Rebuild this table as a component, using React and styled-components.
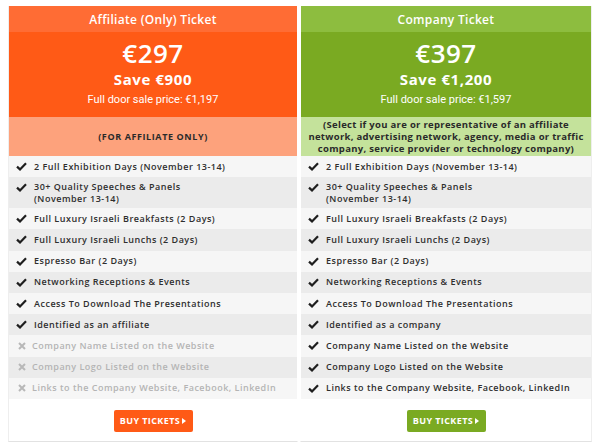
import React from "react";
import styled, { createGlobalStyle } from "styled-components";

const Global = createGlobalStyle`
  html, body { margin: 0; padding: 0; background: #ffffff; }
  body { font-family: "Open Sans", "DejaVu Sans", sans-serif; }
  * { box-sizing: border-box; }
`;

const Page = styled.div`
  width: 600px;
  height: 446px;
  padding: 6px 8px 0 8px;
  display: flex;
  gap: 2px;
`;

const Column = styled.div`
  flex: 0 0 ${(p) => p.$w}px;
  display: flex;
  flex-direction: column;
  background: #ffffff;
  border-bottom: 1px solid #e2e2e2;
  border-left: 1px solid ${(p) => (p.$first ? "#eeeeee" : "transparent")};
  border-right: 1px solid ${(p) => (p.$first ? "transparent" : "#eeeeee")};
  height: 436px;
`;

const Head = styled.div`
  height: 26px;
  display: flex;
  align-items: center;
  justify-content: center;
  background: ${(p) => p.$bg};
  color: #ffffff;
  font-size: 12px;
  font-weight: 600;
  letter-spacing: 0.3px;
`;

const Price = styled.div`
  height: 85px;
  background: ${(p) => p.$bg};
  color: #ffffff;
  display: flex;
  flex-direction: column;
  align-items: center;
  padding-top: 6px;
`;

const Amount = styled.div`
  font-size: 26px;
  font-weight: 600;
  line-height: 31px;
  letter-spacing: 0.5px;
`;

const Save = styled.div`
  font-size: 15px;
  font-weight: 700;
  line-height: 20px;
  letter-spacing: 0.6px;
`;

const Door = styled.div`
  font-family: Roboto, "Liberation Sans", sans-serif;
  font-size: 11px;
  line-height: 16px;
  margin-top: 3px;
`;

const Note = styled.div`
  height: 39px;
  background: ${(p) => p.$bg};
  color: #2a2a2a;
  display: flex;
  align-items: center;
  justify-content: center;
  text-align: center;
  font-size: ${(p) => (p.$small ? "9.5px" : "9px")};
  font-weight: 700;
  line-height: 12px;
  letter-spacing: ${(p) => (p.$small ? "0.3px" : "0.6px")};
  padding: 0 6px;
`;

const List = styled.ul`
  list-style: none;
  margin: 0;
  padding: 0;
`;

const Row = styled.li`
  height: ${(p) => (p.$tall ? 31 : 21.2)}px;
  display: flex;
  align-items: ${(p) => (p.$tall ? "flex-start" : "center")};
  padding: ${(p) => (p.$tall ? "4px 0 0 7px" : "0 0 0 7px")};
  background: ${(p) => (p.$odd ? "#ebebeb" : "#f6f6f6")};
  color: ${(p) => (p.$off ? "#b4b4b4" : "#2e2e2e")};
  font-size: 9px;
  font-weight: 600;
  letter-spacing: 0.5px;
  line-height: 12px;
  gap: ${(p) => (p.$off ? 6 : 7)}px;
`;

const IconBox = styled.span`
  flex: 0 0 ${(p) => (p.$off ? 9 : 11)}px;
  display: flex;
  align-items: center;
  justify-content: center;
  height: 12px;
  margin-left: ${(p) => (p.$off ? 1 : 0)}px;
`;

const Footer = styled.div`
  flex: 1;
  display: flex;
  justify-content: center;
  padding-top: 11px;
`;

const Button = styled.button`
  width: 79px;
  height: 22px;
  border: none;
  border-radius: 2px;
  background: ${(p) => p.$bg};
  color: #ffffff;
  font-family: "Open Sans", sans-serif;
  font-size: 9px;
  font-weight: 700;
  letter-spacing: 0.4px;
  display: flex;
  align-items: center;
  justify-content: center;
  gap: 2px;
  padding: 0;
`;

const Check = () => (
  <svg width="11" height="9" viewBox="0 0 11 9">
    <path d="M1 4.6 L4 7.4 L10 1.2" fill="none" stroke="#1e1e1e" strokeWidth="2.2" />
  </svg>
);

const Cross = () => (
  <svg width="8" height="8" viewBox="0 0 8 8">
    <path d="M1 1 L7 7 M7 1 L1 7" fill="none" stroke="#b8b8b8" strokeWidth="2" />
  </svg>
);

const Arrow = () => (
  <svg width="4" height="6" viewBox="0 0 4 6">
    <path d="M0 0 L4 3 L0 6 Z" fill="#ffffff" />
  </svg>
);

const common = [
  ["2 Full Exhibition Days (November 13-14)"],
  ["30+ Quality Speeches & Panels", "(November 13-14)"],
  ["Full Luxury Israeli Breakfasts (2 Days)"],
  ["Full Luxury Israeli Lunchs (2 Days)"],
  ["Espresso Bar (2 Days)"],
  ["Networking Receptions & Events"],
  ["Access To Download The Presentations"],
];
const extra = [
  ["Company Name Listed on the Website"],
  ["Company Logo Listed on the Website"],
  ["Links to the Company Website, Facebook, LinkedIn"],
];

const plans = [
  {
    title: "Affiliate (Only) Ticket",
    amount: "€297",
    save: "Save €900",
    door: "Full door sale price: €1,197",
    note: ["(FOR AFFILIATE ONLY)"],
    head: "#ff6c34",
    main: "#ff5a16",
    noteBg: "#fda27c",
    w: 290,
    identity: "Identified as an affiliate",
    extraOff: true,
  },
  {
    title: "Company Ticket",
    amount: "€397",
    save: "Save €1,200",
    door: "Full door sale price: €1,597",
    note: [
      "(Select if you are or representative of an affiliate",
      "network, advertising network, agency, media or traffic",
      "company, service provider or technology company)",
    ],
    head: "#8dbd3f",
    main: "#7aaa22",
    noteBg: "#c4e29b",
    w: 292,
    identity: "Identified as a company",
    extraOff: false,
  },
];

function Plan({ plan, first }) {
  const items = [
    ...common.map((l) => ({ lines: l, off: false })),
    { lines: [plan.identity], off: false },
    ...extra.map((l) => ({ lines: l, off: plan.extraOff })),
  ];
  return (
    <Column $w={plan.w} $first={first}>
      <Head $bg={plan.head}>{plan.title}</Head>
      <Price $bg={plan.main}>
        <Amount>{plan.amount}</Amount>
        <Save>{plan.save}</Save>
        <Door>{plan.door}</Door>
      </Price>
      <Note $bg={plan.noteBg} $small={plan.note.length > 1}>
        <div>
          {plan.note.map((n, i) => (
            <div key={i}>{n}</div>
          ))}
        </div>
      </Note>
      <List>
        {items.map((it, i) => (
          <Row key={i} $odd={i % 2 === 1} $tall={it.lines.length > 1} $off={it.off}>
            <IconBox $off={it.off}>{it.off ? <Cross /> : <Check />}</IconBox>
            <span>
              {it.lines.map((l, j) => (
                <div key={j}>{l}</div>
              ))}
            </span>
          </Row>
        ))}
      </List>
      <Footer>
        <Button $bg={plan.main}>
          BUY TICKETS
          <Arrow />
        </Button>
      </Footer>
    </Column>
  );
}

export default function App() {
  return (
    <>
      <Global />
      <Page>
        {plans.map((p, i) => (
          <Plan key={i} plan={p} first={i === 0} />
        ))}
      </Page>
    </>
  );
}
